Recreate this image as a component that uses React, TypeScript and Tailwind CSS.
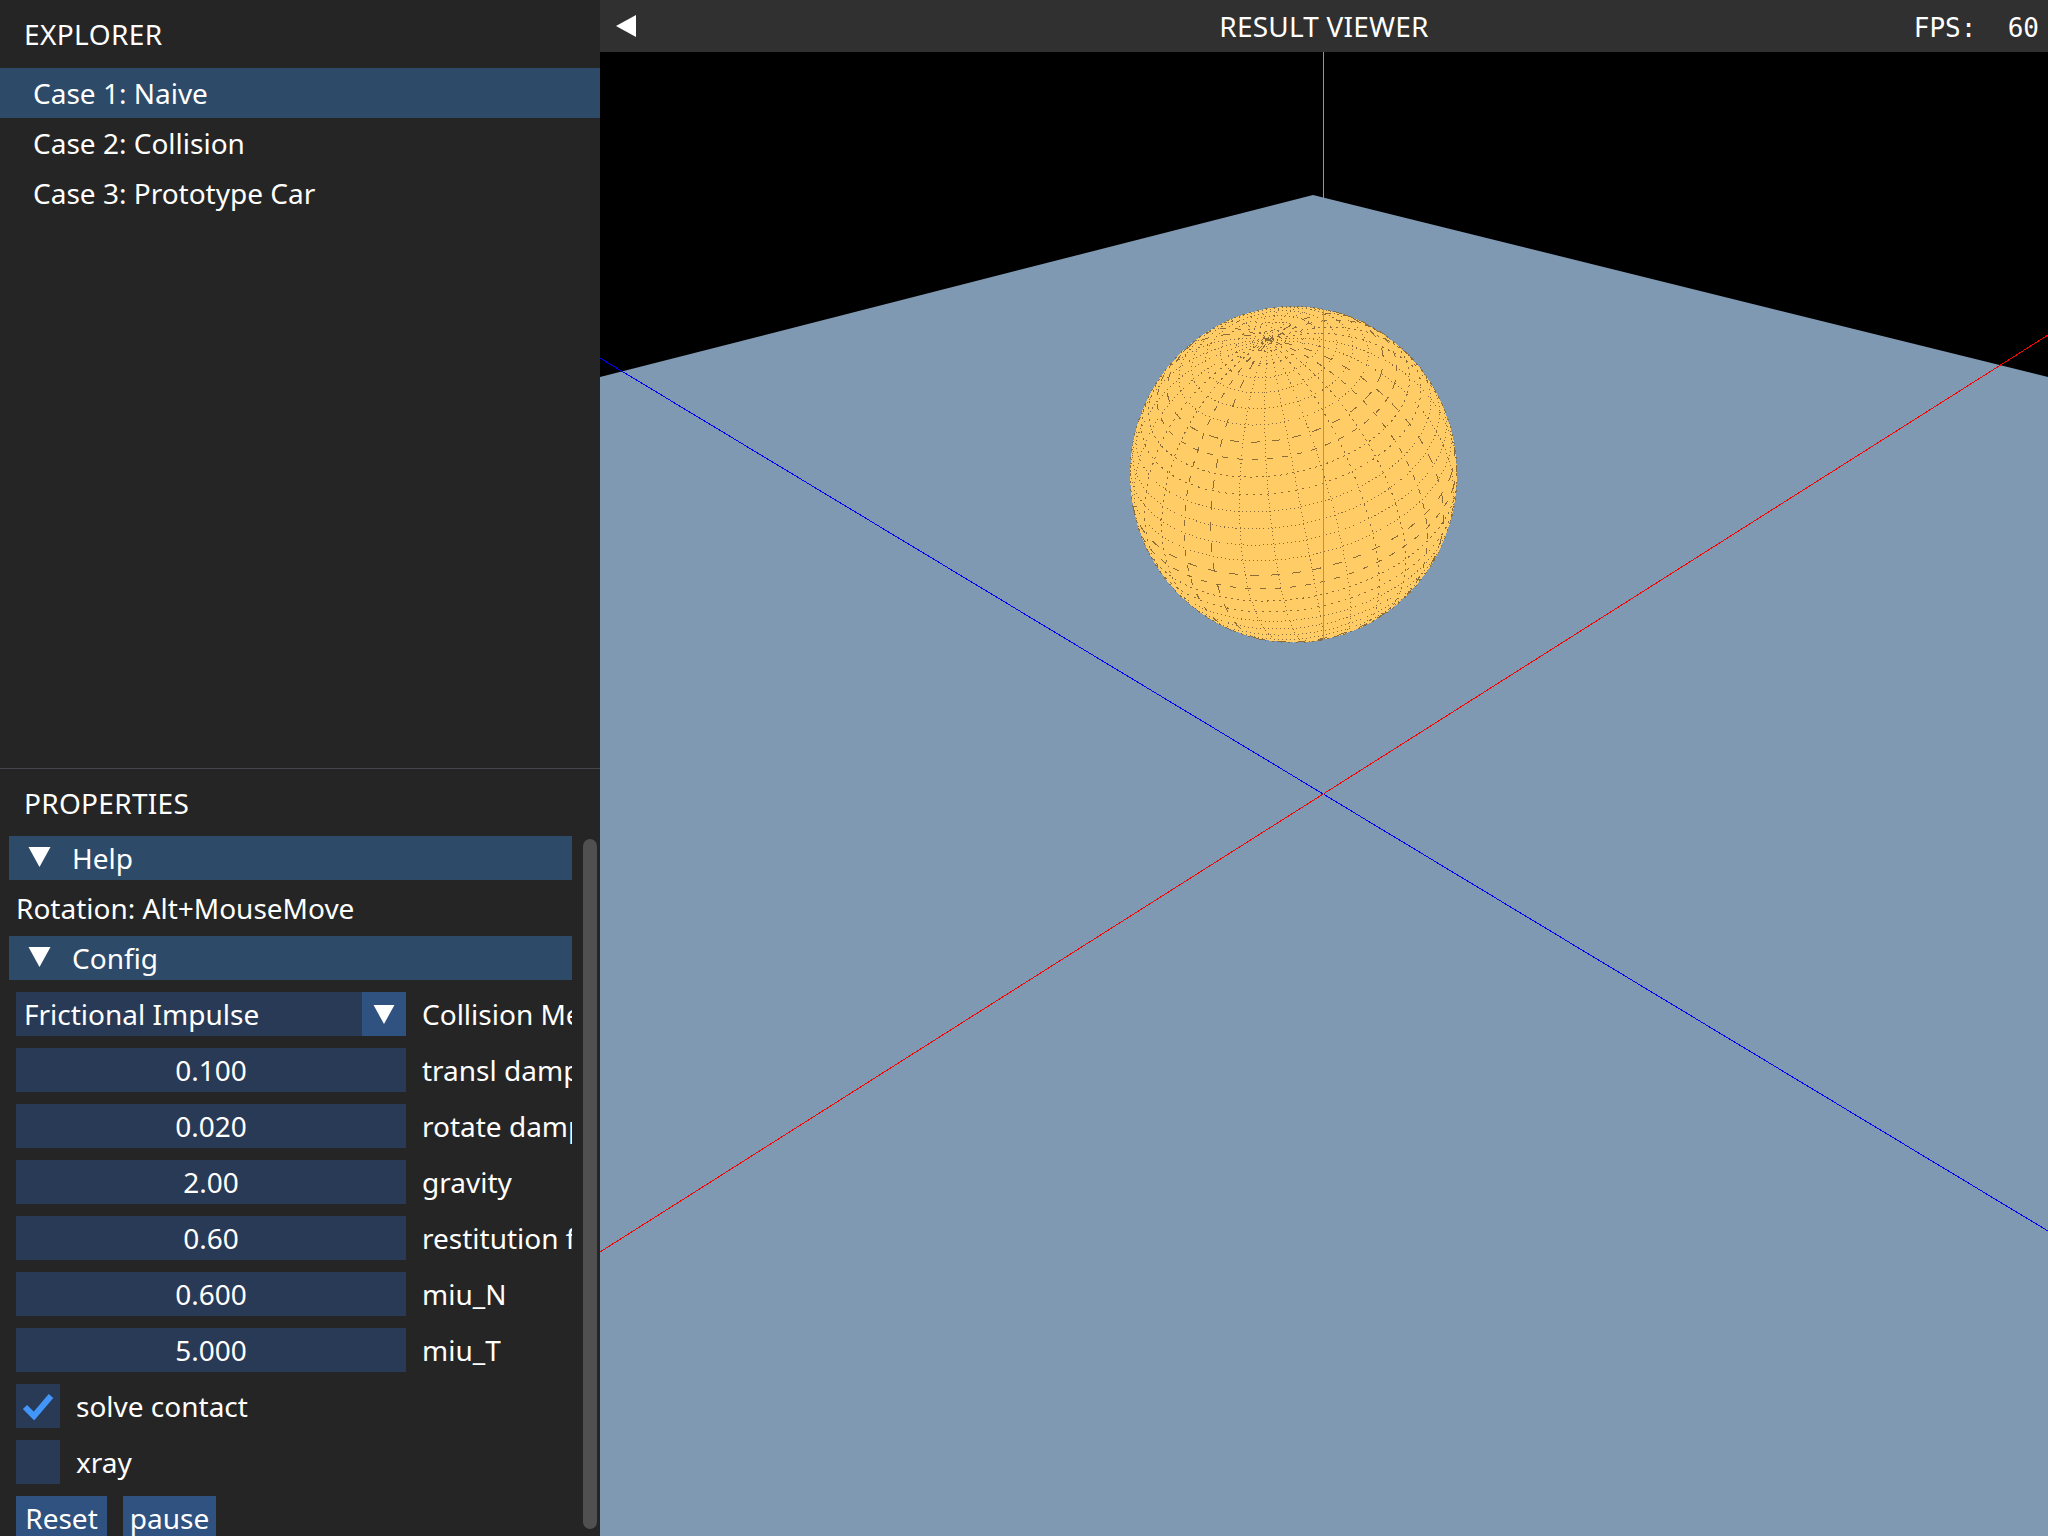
const FONT = "font-['Noto_Sans',sans-serif]";

const cases = ["Case 1: Naive", "Case 2: Collision", "Case 3: Prototype Car"];
const fields = [
  { value: "0.100", label: "transl damping" },
  { value: "0.020", label: "rotate damping" },
  { value: "2.00", label: "gravity" },
  { value: "0.60", label: "restitution factor" },
  { value: "0.600", label: "miu_N" },
  { value: "5.000", label: "miu_T" },
];

// screen position of a point on the sphere, pole tilted towards the viewer
const CX = 693.5;
const CY = 422.5;
const RX = 163.5;
const RY = 168;
const axis = [-0.15, -0.8, 0.581];
const side1 = [0.968, -0.01, 0.25];
const side2 = [
  axis[1] * side1[2] - axis[2] * side1[1],
  axis[2] * side1[0] - axis[0] * side1[2],
  axis[0] * side1[1] - axis[1] * side1[0],
];

function project(lat: number, lon: number) {
  const c = Math.cos(lat);
  const a = c * Math.cos(lon);
  const b = c * Math.sin(lon);
  const s = Math.sin(lat);
  const x = a * side1[0] + b * side2[0] + s * axis[0];
  const y = a * side1[1] + b * side2[1] + s * axis[1];
  const z = a * side1[2] + b * side2[2] + s * axis[2];
  return { x: CX + x * RX, y: CY + y * RY, z };
}

function visiblePaths(points: { x: number; y: number; z: number }[]) {
  let d = "";
  let pen = false;
  for (const p of points) {
    if (p.z < 0) {
      pen = false;
      continue;
    }
    d += `${pen ? "L" : "M"}${p.x.toFixed(1)} ${p.y.toFixed(1)}`;
    pen = true;
  }
  return d;
}

const dashes = ["1 3", "1 3", "6 9", "1 3", "2 5", "9 12", "1 3", "2 4"];
const wire: { d: string; dash: string }[] = [];
for (let i = 1; i < 30; i++) {
  const lat = -Math.PI / 2 + (i * Math.PI) / 30;
  const pts = [];
  for (let k = 0; k <= 120; k++) pts.push(project(lat, (k * Math.PI) / 60));
  wire.push({ d: visiblePaths(pts), dash: dashes[(i * 3) % dashes.length] });
}
for (let j = 0; j < 30; j++) {
  const lon = (j * Math.PI) / 15;
  const pts = [];
  for (let k = 0; k <= 60; k++) pts.push(project(-Math.PI / 2 + (k * Math.PI) / 60, lon));
  wire.push({ d: visiblePaths(pts), dash: dashes[(j * 5) % dashes.length] });
}

function Triangle({ className }: { className: string }) {
  return (
    <svg viewBox="0 0 22 20" className={className}>
      <path d="M0 0H22L11 20Z" fill="#fff" />
    </svg>
  );
}

function SectionBar({ title }: { title: string }) {
  return (
    <div className="h-[44px] bg-[#2d4a69] flex items-center pl-[19px] gap-[21px] shrink-0">
      <Triangle className="w-[23px] h-[20px] -mt-[2px]" />
      <span className="leading-none">{title}</span>
    </div>
  );
}

function Viewport() {
  return (
    <svg viewBox="0 0 1448 1484" className="block w-[1448px] h-[1484px] bg-black">
      <path d="M0 325L713 143L1448 325V1484H0Z" fill="#7f99b3" />
      <g strokeWidth="1" shapeRendering="crispEdges">
        <path d="M0 306L1448 1179" stroke="#0000ff" />
        <path d="M0 1200L1448 283" stroke="#ff0000" />
      </g>
      <ellipse cx={CX} cy={CY} rx={RX} ry={RY} fill="#ffcc66" stroke="#8a6d3b" strokeWidth="1" strokeDasharray="2 6" shapeRendering="crispEdges" />
      <g fill="none" stroke="#8a6d3b" strokeWidth="1" shapeRendering="crispEdges">
        {wire.map((w, i) => (
          <path key={i} d={w.d} strokeDasharray={w.dash} />
        ))}
      </g>
      <path d="M723.5 0V1484" stroke="#00ff00" strokeWidth="1" shapeRendering="crispEdges" />
    </svg>
  );
}

export default function App() {
  return (
    <div className={`${FONT} flex w-[2048px] h-[1536px] overflow-hidden bg-[#252525] text-white text-[28px]`}>
      <aside className="w-[600px] shrink-0 flex flex-col">
        <div className="h-[769px] shrink-0 flex flex-col border-b border-[#45454d]">
          <div className="h-[68px] flex items-center pl-[24px] tracking-[0.4px]">EXPLORER</div>
          {cases.map((c, i) => (
            <div
              key={c}
              className={`h-[50px] flex items-center pl-[33px] ${i === 0 ? "bg-[#2d4a69]" : ""}`}
            >
              {c}
            </div>
          ))}
        </div>

        <div className="h-[67px] shrink-0 flex items-center pl-[24px] tracking-[0.3px]">PROPERTIES</div>

        <div className="flex items-start pl-[9px] gap-[11px]">
          <div className="w-[563px] shrink-0 flex flex-col">
            <SectionBar title="Help" />
            <div className="h-[56px] flex items-center pl-[7px]">Rotation: Alt+MouseMove</div>
            <SectionBar title="Config" />
            <div className="flex flex-col gap-[12px] pl-[7px] pt-[12px]">
              <div className="flex items-center gap-[16px] h-[44px]">
                <div className="w-[390px] h-[44px] shrink-0 bg-[#283a55] flex items-center justify-between pl-[8px]">
                  <span>Frictional Impulse</span>
                  <div className="w-[44px] h-[44px] bg-[#2f5280] flex items-center justify-center">
                    <Triangle className="w-[22px] h-[19px]" />
                  </div>
                </div>
                <span className="overflow-hidden whitespace-nowrap">Collision Method</span>
              </div>
              {fields.map((f) => (
                <div key={f.label} className="flex items-center gap-[16px] h-[44px]">
                  <div className="w-[390px] h-[44px] shrink-0 bg-[#283a55] flex items-center justify-center">
                    {f.value}
                  </div>
                  <span className="overflow-hidden whitespace-nowrap">{f.label}</span>
                </div>
              ))}
              <div className="flex items-center gap-[16px] h-[44px]">
                <div className="w-[44px] h-[44px] bg-[#283a55] flex items-center justify-center">
                  <svg viewBox="0 0 32 28" className="w-[32px] h-[28px]">
                    <path d="M3 15L12 24L29 4" fill="none" stroke="#4296fa" strokeWidth="6" />
                  </svg>
                </div>
                <span>solve contact</span>
              </div>
              <div className="flex items-center gap-[16px] h-[44px]">
                <div className="w-[44px] h-[44px] bg-[#283a55]" />
                <span>xray</span>
              </div>
              <div className="flex gap-[16px] h-[44px]">
                <div className="w-[91px] bg-[#2f5280] flex items-center justify-center">Reset</div>
                <div className="w-[93px] bg-[#2f5280] flex items-center justify-center">pause</div>
              </div>
            </div>
          </div>
          <div className="w-[14px] h-[690px] mt-[3px] rounded-full bg-[#505050] shrink-0" />
        </div>
      </aside>

      <main className="flex-1 flex flex-col">
        <header className="relative h-[52px] shrink-0 bg-[#303030] flex items-center justify-center">
          <svg viewBox="0 0 20 22" className="absolute left-[16px] top-[15px] w-[20px] h-[22px]">
            <path d="M20 0V22L0 11Z" fill="#fff" />
          </svg>
          <span className="tracking-[0.2px]">RESULT VIEWER</span>
          <span className="absolute right-[9px] top-[10px] font-['DejaVu_Sans_Mono',monospace] text-[26px] leading-[36px] whitespace-pre">
            FPS:  60
          </span>
        </header>
        <Viewport />
      </main>
    </div>
  );
}
